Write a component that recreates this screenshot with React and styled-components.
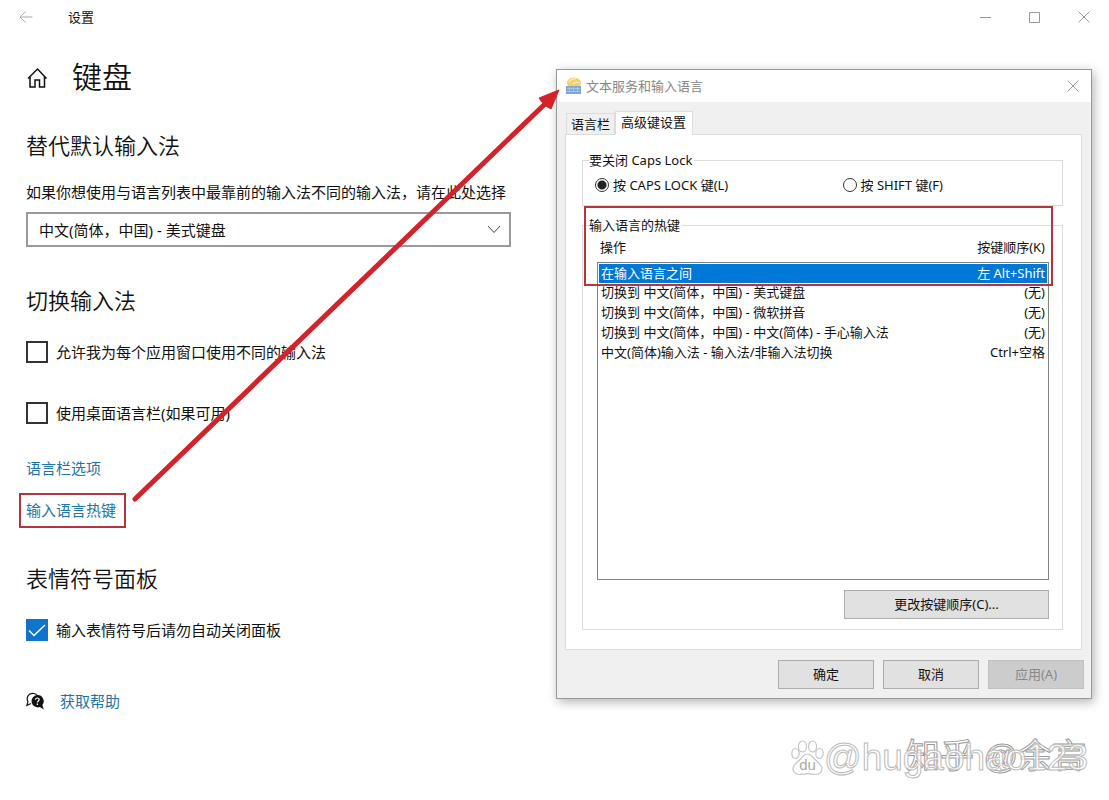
import React, { useState } from 'react';
import styled, { createGlobalStyle } from 'styled-components';

const GlobalStyle = createGlobalStyle`
  * {
    box-sizing: border-box;
  }

  body {
    margin: 0;
    background: #fff;
  }

  body, button, select, input {
    font-family: 'Noto Sans', 'Noto Sans CJK SC', sans-serif;
  }
`;

const Page = styled.div`
  position: relative;
  min-height: 100vh;
  overflow: hidden;
  color: #111;
  font-size: 15px;
  line-height: 20px;
`;

const WindowBar = styled.header`
  display: flex;
  align-items: center;
  height: 34px;
  padding: 0 1px 0 18px;
  font-size: 13px;
`;

const WindowTitle = styled.span`
  flex: 1;
  padding-left: 34px;
`;

const IconButton = styled.button`
  display: flex;
  align-items: center;
  justify-content: center;
  width: ${(props) => props.$width}px;
  height: 32px;
  padding: 0;
  border: none;
  background: none;
  color: ${(props) => props.$color || '#999'};
`;

const Content = styled.div`
  display: flex;
  align-items: flex-start;
  justify-content: space-between;
  padding-right: 17px;
`;

const Settings = styled.main`
  flex: 0 1 511px;
  padding: 23px 0 0 26px;
`;

const PageHeading = styled.h1`
  display: flex;
  align-items: center;
  gap: 24px;
  margin: 0 0 33px;
  font-size: 30px;
  font-weight: 350;
  line-height: 40px;
`;

const Section = styled.section`
  margin-bottom: ${(props) => props.$space}px;
`;

const SectionHeading = styled.h2`
  margin: 0 0 ${(props) => props.$space || 26}px;
  font-size: 22px;
  font-weight: 350;
  line-height: 30px;
`;

const FieldLabel = styled.label`
  display: block;
  margin-bottom: 10px;
  white-space: nowrap;
`;

const SelectBox = styled.div`
  position: relative;

  svg {
    position: absolute;
    right: 10px;
    top: 13px;
    pointer-events: none;
  }
`;

const Select = styled.select`
  display: block;
  width: 100%;
  height: 35px;
  padding: 0 32px 0 11px;
  border: 2px solid #999;
  border-radius: 0;
  background: #fff;
  color: #111;
  font-size: 15px;
  appearance: none;
`;

const CheckLabel = styled.label`
  display: flex;
  align-items: center;
  gap: 8px;
  height: 22px;
  margin-bottom: ${(props) => props.$space || 0}px;
`;

const CheckMark = styled.span`
  display: grid;

  > * {
    grid-area: 1 / 1;
  }

  svg {
    pointer-events: none;
  }
`;

const CheckBox = styled.input`
  width: 22px;
  height: 22px;
  margin: 0;
  border: 2px solid #333;
  background: #fff;
  appearance: none;

  &:checked {
    border-color: #0f74cc;
    background: #0f74cc;
  }
`;

const Link = styled.a`
  color: #1a75a8;
  text-decoration: none;
`;

const LinkRow = styled.div`
  margin-bottom: 15px;
`;

const MarkedLink = styled.div`
  width: fit-content;
  margin-left: -7px;
  padding: 5px 8px 6px 5px;
  border: 2px solid #b5353b;
`;

const HelpRow = styled.div`
  display: flex;
  align-items: center;
  gap: 16px;
`;

const Dialog = styled.div`
  flex: 0 1 536px;
  margin-top: 35px;
  border: 1px solid #999;
  background: #f0f0f0;
  box-shadow: 2px 3px 10px rgba(0, 0, 0, 0.3);
  font-size: 13px;
  line-height: 18px;
`;

const DialogBar = styled.div`
  display: flex;
  align-items: center;
  gap: 4px;
  height: 32px;
  padding-left: 8px;
  background: #fff;
  color: #888;
`;

const DialogTitle = styled.span`
  flex: 1;
`;

const Tabs = styled.div`
  display: flex;
  align-items: flex-end;
  height: 32px;
  padding-left: 9px;
`;

const Tab = styled.button`
  position: relative;
  height: ${(props) => (props.$active ? 24 : 21)}px;
  margin-bottom: ${(props) => (props.$active ? -1 : 0)}px;
  padding: ${(props) => (props.$active ? '0 6px 3px 5px' : '0 4px')};
  border: 1px solid #dcdcdc;
  border-bottom: none;
  background: ${(props) => (props.$active ? '#fff' : '#f0f0f0')};
  color: #111;
  font-size: 13px;
  line-height: 18px;
  white-space: nowrap;
`;

const Panel = styled.div`
  margin: 0 9px 0 8px;
  padding: 16px 18px 19px 16px;
  border: 1px solid #dcdcdc;
  background: #fff;
`;

const GroupWrap = styled.div`
  position: relative;
  margin-top: ${(props) => props.$space || 0}px;
`;

const Group = styled.fieldset`
  min-width: 0;
  margin: 0;
  padding: ${(props) => props.$padding};
  border: 1px solid #dcdcdc;
`;

const Legend = styled.legend`
  margin-left: ${(props) => props.$shift}px;
  padding: 0 2px 0 0;
`;

const RadioRow = styled.div`
  display: grid;
  grid-template-columns: 53% 1fr;
`;

const RadioLabel = styled.label`
  display: flex;
  align-items: center;
  gap: 4px;
`;

const Radio = styled.input`
  width: 14px;
  height: 14px;
  margin: 0;
  border: 1px solid #333;
  border-radius: 50%;
  background: #fff;
  appearance: none;

  &:checked {
    background: radial-gradient(circle, #222 4px, #fff 5px);
  }
`;

const HotkeyTable = styled.table`
  display: block;

  thead, tbody {
    display: block;
  }

  tbody {
    height: 318px;
    border: 1px solid #828282;
    padding-top: 1px;
  }
`;

const HeadRow = styled.tr`
  display: flex;
  justify-content: space-between;
  padding: 0 4px 6px 3px;

  th {
    padding: 0;
    font-weight: 400;
  }
`;

const HotkeyRow = styled.tr`
  display: flex;
  justify-content: space-between;
  margin: 0 1px;
  padding: ${(props) => (props.$selected ? '0 2px 1px' : '0 2px 2px')};
  background: ${(props) => (props.$selected ? '#0078d7' : 'none')};
  color: ${(props) => (props.$selected ? '#fff' : '#111')};

  td {
    padding: 0;
  }
`;

const Highlight = styled.div`
  position: absolute;
  top: -10px;
  left: 2px;
  right: 10px;
  height: 80px;
  border: 2px solid #b5353b;
  pointer-events: none;
`;

const ButtonRow = styled.div`
  display: flex;
  justify-content: flex-end;
  gap: 9px;
  padding: ${(props) => props.$padding};
`;

const Button = styled.button`
  width: ${(props) => (props.$wide ? 205 : 96)}px;
  height: 29px;
  padding: 0 0 2px;
  border: 1px solid #adadad;
  background: #e1e1e1;
  color: #111;
  font-size: 13px;

  &:disabled {
    border-color: #bfbfbf;
    background: #ccc;
    color: #888;
  }
`;

const Arrow = styled.svg`
  position: absolute;
  top: 80px;
  left: 125px;
  pointer-events: none;
`;

const Watermark = styled.div`
  position: absolute;
  right: 21px;
  bottom: 20px;
  display: flex;
  align-items: center;
  color: #fff;
  font-family: 'Liberation Sans', 'Noto Sans CJK SC', sans-serif;
  font-size: 37px;
  line-height: 44px;
  white-space: nowrap;
  pointer-events: none;
  -webkit-text-stroke: 1px #bbb;
`;

const WatermarkUnder = styled.span`
  position: absolute;
  right: 2px;
  top: -2px;
  font-size: 34px;
  -webkit-text-stroke: 1px #999;
`;

const WatermarkName = styled.span`
  position: relative;
  color: rgba(255, 255, 255, 0.7);
`;

const hotkeys = [
  { action: '在输入语言之间', keys: '左 Alt+Shift' },
  { action: '切换到 中文(简体，中国) - 美式键盘', keys: '(无)' },
  { action: '切换到 中文(简体，中国) - 微软拼音', keys: '(无)' },
  { action: '切换到 中文(简体，中国) - 中文(简体) - 手心输入法', keys: '(无)' },
  { action: '中文(简体)输入法 - 输入法/非输入法切换', keys: 'Ctrl+空格' },
];

const CloseIcon = () => (
  <svg width="12" height="12" viewBox="0 0 12 12" fill="none" stroke="currentColor">
    <path d="M.5.5l11 11M11.5.5l-11 11" />
  </svg>
);

const HomeIcon = () => (
  <svg width="22" height="22" viewBox="0 0 22 22" fill="none" stroke="#111" strokeWidth="1.5">
    <path d="M2 12.500L11.500 3l9 9.500M4 10.700V21h5v-7h4.500v7h5V10.700" />
  </svg>
);

const HelpIcon = () => (
  <svg width="18" height="18" viewBox="0 0 18 18" fill="none">
    <path d="M5 11.500L.8 13.500l1.200-3.800A5.400 5.400 0 1 1 11.500 4" stroke="#111" strokeWidth="1.200" />
    <path d="M11.300 3a6.200 6.200 0 1 0 2.600 12l3.800 2.500-1.300-4.500A6.200 6.200 0 0 0 11.300 3z" fill="#111" />
    <path d="M9.500 7.800c0-2.400 3.700-2.300 3.700-.2 0 1.400-1.800 1.400-1.800 2.900M11.400 11.600v1.300" stroke="#fff" strokeWidth="1.200" />
  </svg>
);

const LanguageIcon = () => (
  <svg width="17" height="18" viewBox="0 0 17 18">
    <ellipse cx="9" cy="6" rx="7" ry="5.500" fill="#f3cf6b" />
    <path d="M4 5c2-3 5-3.500 7-3M8 7c2-2 4-2 6-1" stroke="#fbeab5" strokeWidth="1.500" fill="none" />
    <rect x="1" y="9" width="15" height="8" fill="#7fa6d9" />
    <path d="M2 11.500h13M2 14.500h13M4.500 10v5M8.500 10v5M12.500 10v5" stroke="#a9c5ea" />
  </svg>
);

const PawIcon = () => (
  <svg width="33" height="36" viewBox="0 0 33 36" fill="#fff" stroke="#c4c4c4" strokeWidth="1.200">
    <ellipse cx="11.500" cy="6.500" rx="4" ry="5.500" />
    <ellipse cx="21.500" cy="6.500" rx="4" ry="5.500" />
    <ellipse cx="4.500" cy="13.500" rx="3.700" ry="5" />
    <ellipse cx="28.500" cy="13.500" rx="3.700" ry="5" />
    <path d="M16.500 14c-4 0-5.500 4-8.500 6.500S2 26 2 29s2.500 5.500 6 5.500 5-.8 8.500-.8 5 .8 8.500.8 6-2.500 6-5.500-3-6-6-8.500-4.500-6.500-8.500-6.500z" />
    <text x="16.500" y="30" textAnchor="middle" fontSize="15" fill="#aaa" stroke="none">du</text>
  </svg>
);

const App = () => {
  const [capsKey, setCapsKey] = useState('caps');
  const [selected, setSelected] = useState(0);

  return (
    <Page>
      <GlobalStyle />
      <WindowBar>
        <IconButton $width={16} $color="#aaa" aria-label="返回">
          <svg width="14" height="12" viewBox="0 0 14 12" fill="none" stroke="currentColor">
            <path d="M13.500 6H1M6.500.5L1 6l5.500 5.500" />
          </svg>
        </IconButton>
        <WindowTitle>设置</WindowTitle>
        <IconButton $width={49} aria-label="最小化">
          <svg width="11" height="11" viewBox="0 0 11 11" stroke="currentColor">
            <path d="M0 5.500h11" />
          </svg>
        </IconButton>
        <IconButton $width={49} aria-label="最大化">
          <svg width="11" height="11" viewBox="0 0 11 11" fill="none" stroke="currentColor">
            <path d="M.5.5h10v10H.5z" />
          </svg>
        </IconButton>
        <IconButton $width={49} aria-label="关闭">
          <CloseIcon />
        </IconButton>
      </WindowBar>

      <Content>
        <Settings>
          <PageHeading>
            <HomeIcon />
            键盘
          </PageHeading>

          <Section $space={38}>
            <SectionHeading $space={22}>替代默认输入法</SectionHeading>
            <FieldLabel htmlFor="method">
              如果你想使用与语言列表中最靠前的输入法不同的输入法，请在此处选择
            </FieldLabel>
            <SelectBox>
              <Select id="method">
                <option>中文(简体，中国) - 美式键盘</option>
              </Select>
              <svg width="14" height="9" viewBox="0 0 14 9" fill="none" stroke="#444">
                <path d="M1 1l6 6.500L13 1" />
              </svg>
            </SelectBox>
          </Section>

          <Section $space={35}>
            <SectionHeading>切换输入法</SectionHeading>
            <CheckLabel $space={39}>
              <CheckBox type="checkbox" />
              允许我为每个应用窗口使用不同的输入法
            </CheckLabel>
            <CheckLabel $space={34}>
              <CheckBox type="checkbox" />
              使用桌面语言栏(如果可用)
            </CheckLabel>
            <LinkRow>
              <Link href="#options">语言栏选项</Link>
            </LinkRow>
            <MarkedLink>
              <Link href="#hotkeys">输入语言热键</Link>
            </MarkedLink>
          </Section>

          <Section $space={50}>
            <SectionHeading>表情符号面板</SectionHeading>
            <CheckLabel>
              <CheckMark>
                <CheckBox type="checkbox" defaultChecked />
                <svg width="22" height="22" viewBox="0 0 22 22" fill="none" stroke="#fff" strokeWidth="1.500">
                  <path d="M3 11.500l5 5L19 6" />
                </svg>
              </CheckMark>
              输入表情符号后请勿自动关闭面板
            </CheckLabel>
          </Section>

          <HelpRow>
            <HelpIcon />
            <Link href="#help">获取帮助</Link>
          </HelpRow>
        </Settings>

        <Dialog role="dialog" aria-labelledby="dialog-title">
          <DialogBar>
            <LanguageIcon />
            <DialogTitle id="dialog-title">文本服务和输入语言</DialogTitle>
            <IconButton $width={36} aria-label="关闭">
              <CloseIcon />
            </IconButton>
          </DialogBar>
          <Tabs>
            <Tab>语言栏</Tab>
            <Tab $active>高级键设置</Tab>
          </Tabs>
          <Panel>
            <Group $padding="7px 0 11px 12px">
              <Legend $shift={-6}>要关闭 Caps Lock</Legend>
              <RadioRow>
                <RadioLabel>
                  <Radio
                    type="radio"
                    name="caps"
                    checked={capsKey === 'caps'}
                    onChange={() => setCapsKey('caps')}
                  />
                  按 CAPS LOCK 键(L)
                </RadioLabel>
                <RadioLabel>
                  <Radio
                    type="radio"
                    name="caps"
                    checked={capsKey === 'shift'}
                    onChange={() => setCapsKey('shift')}
                  />
                  按 SHIFT 键(F)
                </RadioLabel>
              </RadioRow>
            </Group>

            <GroupWrap $space={10}>
              <Group $padding="4px 13px 10px 14px">
                <Legend $shift={-8}>输入语言的热键</Legend>
                <HotkeyTable>
                  <thead>
                    <HeadRow>
                      <th>操作</th>
                      <th>按键顺序(K)</th>
                    </HeadRow>
                  </thead>
                  <tbody>
                    {hotkeys.map((item, index) => (
                      <HotkeyRow
                        key={item.action}
                        $selected={index === selected}
                        onClick={() => setSelected(index)}
                      >
                        <td>{item.action}</td>
                        <td>{item.keys}</td>
                      </HotkeyRow>
                    ))}
                  </tbody>
                </HotkeyTable>
                <ButtonRow $padding="10px 0 0">
                  <Button $wide>更改按键顺序(C)...</Button>
                </ButtonRow>
              </Group>
              <Highlight />
            </GroupWrap>
          </Panel>
          <ButtonRow $padding="10px 7px 9px">
            <Button>确定</Button>
            <Button>取消</Button>
            <Button disabled>应用(A)</Button>
          </ButtonRow>
        </Dialog>
      </Content>

      <Arrow width="440" height="430" viewBox="0 0 440 430">
        <path d="M10 419L422 22" stroke="#d2232a" strokeWidth="5" strokeLinecap="round" />
        <path d="M434 10l-20 8 5 7 7 4z" fill="#d2232a" stroke="#d2232a" />
      </Arrow>

      <Watermark>
        <PawIcon />
        <WatermarkUnder>知乎 @余言</WatermarkUnder>
        <WatermarkName>@hugaohao123</WatermarkName>
      </Watermark>
    </Page>
  );
};

export default App;
